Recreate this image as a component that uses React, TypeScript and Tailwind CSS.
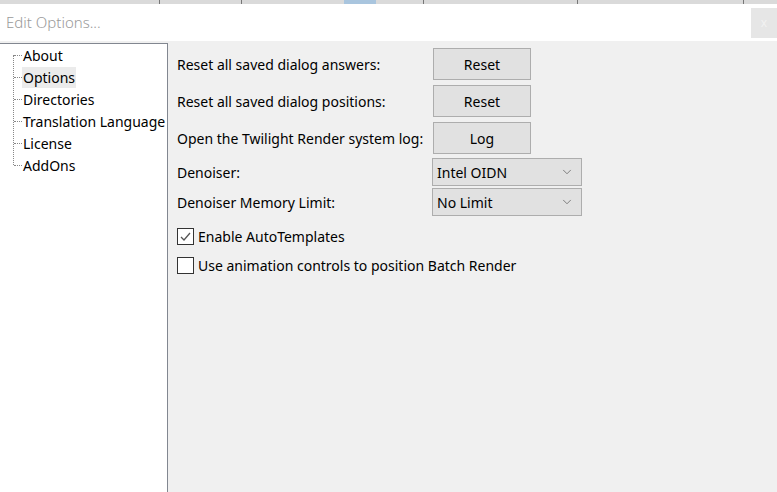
import { ChevronDown } from "lucide-react";

const treeItems = ["About", "Options", "Directories", "Translation Language", "License", "AddOns"];

function Btn({ label }: { label: string }) {
  return (
    <button className="h-[32px] w-[98px] border border-[#adadad] bg-[#e1e1e1] text-[14px] text-black">
      {label}
    </button>
  );
}

function Select({ value }: { value: string }) {
  return (
    <div className="flex h-[28px] w-[150px] items-center justify-between border border-[#adadad] bg-[#e1e1e1] pl-[4px] pr-[7px] text-[14px] text-black">
      <span>{value}</span>
      <ChevronDown size={14} strokeWidth={1.2} className="text-[#555]" />
    </div>
  );
}

function Check({ checked, label }: { checked: boolean; label: string }) {
  return (
    <div className="flex h-[29px] items-center gap-[4px]">
      <div className="flex h-[17px] w-[17px] items-center justify-center border border-[#333] bg-white">
        {checked && (
          <svg width="13" height="13" viewBox="0 0 13 13">
            <path d="M2 7 L5 10 L11 3" fill="none" stroke="#555" strokeWidth="1.3" />
          </svg>
        )}
      </div>
      <span>{label}</span>
    </div>
  );
}

export default function App() {
  return (
    <div
      className="flex h-[492px] w-[777px] flex-col overflow-hidden bg-[#f0f0f0] text-[14px] text-black"
      style={{ fontFamily: '"Noto Sans", "Open Sans", sans-serif' }}
    >
      {/* strip of the window behind */}
      <div className="flex h-[4px] bg-[#dadada]">
        <div className="w-[160px] border-r border-[#777]" />
        <div className="w-[82px] border-r border-[#777]" />
        <div className="w-[102px]" />
        <div className="w-[32px] bg-[#a9c5de]" />
        <div className="w-[48px] border-r border-[#777]" />
        <div className="w-[154px] border-r border-[#777]" />
        <div className="w-[166px] border-r border-[#777]" />
      </div>
      {/* title bar */}
      <div className="flex h-[37px] items-center justify-between bg-white pl-[6px]">
        <span className="text-[15px] font-light text-[#9a9a9a]">Edit Options...</span>
        <div className="flex h-[30px] w-[26px] items-center justify-center bg-[#e6e6e6] text-[12px] text-[#f2f2f2]">x</div>
      </div>
      <div className="flex flex-1 pt-[2px]">
        {/* tree */}
        <div className="w-[168px] overflow-hidden border-t border-r border-[#828790] bg-white">
          <div className="relative pl-[22px]">
            <div className="absolute left-[13px] top-[11px] h-[110px] border-l border-dotted border-[#888]" />
            {treeItems.map((t) => (
              <div key={t} className="relative flex h-[22px] items-center whitespace-nowrap">
                <div className="absolute left-[-8px] top-[11px] w-[8px] border-t border-dotted border-[#888]" />
                <span className={t === "Options" ? "bg-[#ebebeb] px-[1px]" : "px-[1px]"}>{t}</span>
              </div>
            ))}
          </div>
        </div>
        {/* options */}
        <div className="flex-1 pl-[9px] pt-[5px]">
          <div className="flex flex-col gap-[5px]">
            <div className="flex items-center">
              <span className="w-[256px]">Reset all saved dialog answers:</span>
              <Btn label="Reset" />
            </div>
            <div className="flex items-center">
              <span className="w-[256px]">Reset all saved dialog positions:</span>
              <Btn label="Reset" />
            </div>
            <div className="flex items-center">
              <span className="w-[256px]">Open the Twilight Render system log:</span>
              <Btn label="Log" />
            </div>
          </div>
          <div className="mt-[4px] flex flex-col gap-[2px]">
            <div className="flex items-center">
              <span className="w-[255px]">Denoiser:</span>
              <Select value="Intel OIDN" />
            </div>
            <div className="flex items-center">
              <span className="w-[255px]">Denoiser Memory Limit:</span>
              <Select value="No Limit" />
            </div>
          </div>
          <div className="mt-[6px] flex flex-col">
            <Check checked label="Enable AutoTemplates" />
            <Check checked={false} label="Use animation controls to position Batch Render" />
          </div>
        </div>
      </div>
    </div>
  );
}
